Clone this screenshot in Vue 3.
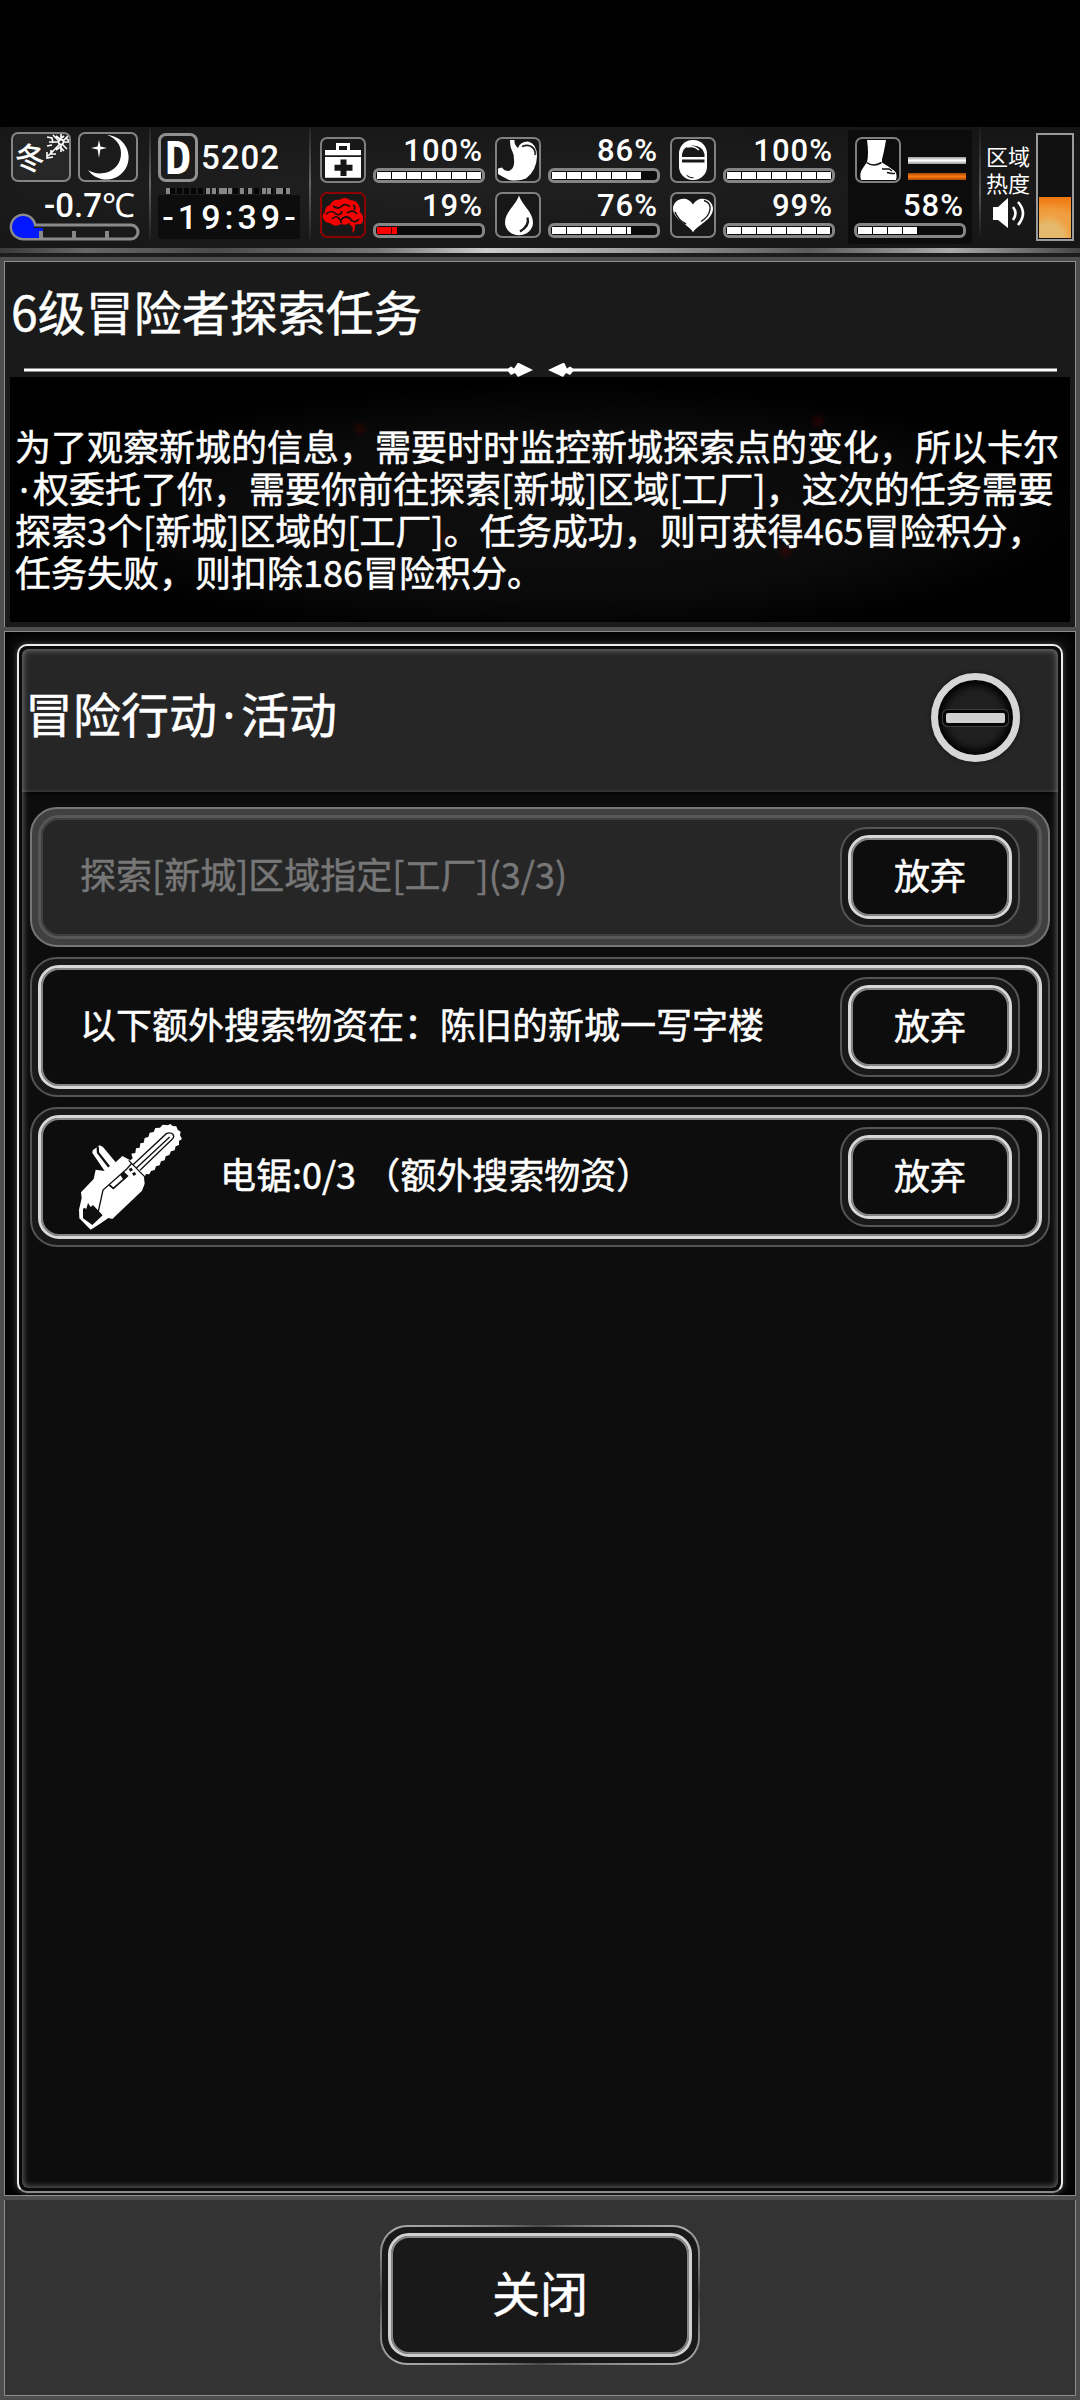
<script setup>
const stats = [
  { icon: 'kit', value: 100 },
  { icon: 'stomach', value: 86 },
  { icon: 'pill', value: 100 },
  { icon: 'brain', value: 19, danger: true },
  { icon: 'drop', value: 76 },
  { icon: 'heart', value: 99 },
]
const barcode = [0, 40, 46, 53, 57, 62, 74, 82, 96, 101, 110, 113, 120]
const fillWidth = (v) => Math.round(v * 1.04) + 'px'
</script>

<template>
  <div class="screen">
    <header class="hud">
      <section class="climate">
        <div class="tiles">
          <div class="tile winter">
            <span>冬</span>
            <svg class="flake" viewBox="0 0 24 26" width="24" height="26" fill="none" stroke="#fff" stroke-width="1.6">
              <path d="M16 0v18M4 8h20M8 1l14 14M24 1L3 22M2 3l5 1 1 5M2 12l5-1M11 2l4 3 4-3M11 16l4-3 4 4M21 4l3 3M2 18v6l6-1M6 16v4h5" />
              <circle cx="16" cy="8" r="2.4" fill="#222" />
            </svg>
          </div>
          <div class="tile">
            <svg viewBox="0 0 56 46" width="56" height="46" fill="#fff">
              <path d="M27 1A22.3 22.3 0 1 1 8 36C20 44 41 38 41 19C41 11 36 4 27 1z" />
              <path d="M19 6l1.4 6.6L27 14l-6.6 1.4L19 24l-1.4-8.6L11 14l6.6-1.4z" />
            </svg>
          </div>
        </div>
        <div class="lcd temp">-0.7℃</div>
        <svg class="thermo" viewBox="0 0 132 30" width="132" height="30">
          <path d="M26 13H122a7 7 0 0 1 0 14H15A12 12 0 1 1 26 13z" fill="#191919" stroke="#8b8b8b" stroke-width="3" />
          <path d="M25 16h9v4l-3 1v5H15A11 11 0 1 1 25 16z" fill="#0418ff" />
          <path d="M32 19v7M65 19v7M98 19v7" stroke="#888" stroke-width="4" />
        </svg>
      </section>
      <i class="sep"></i>
      <section class="clock">
        <div class="day"><b class="lcd">D</b><span class="lcd">5202</span></div>
        <svg viewBox="0 0 126 8" width="126" height="8">
          <path d="M4 4h118" stroke="#050505" stroke-width="6" stroke-dasharray="5 2" />
          <rect v-for="x in barcode" :key="x" :x="x" y="1" width="4" height="6" fill="#868686" />
        </svg>
        <div class="lcd time">-19:39-</div>
      </section>
      <i class="sep"></i>
      <section class="stats">
        <div v-for="s in stats" :key="s.icon" class="stat">
          <div class="ico" :class="{ red: s.danger }">
            <svg viewBox="2 2 42 42" width="42" height="42" fill="#fff">
              <g v-if="s.icon === 'kit'">
                <path d="M16 13V6h14v7h11v5.300H5V13zM19 13h8V9h-8z" fill-rule="evenodd" />
                <path d="M5 20h36v20.700H5z" />
                <path d="M20.500 22.500h6v5.300h6v6h-6v5.200h-6v-5.200h-6v-6h6z" fill="#161616" />
              </g>
              <g v-else-if="s.icon === 'stomach'">
                <path d="M15 3h4.500q-.5 5 3.500 8q2-6.500 10-6.500q9 2 9 15q-.5 14-11 22q-7 3-17 1.500q-6-3-11-6v-5.500l4-1q2 3.500 7 3.500q6-2.500 5-11q0-6-2-9.500t-2-10.500z" />
                <path d="M27 9.500q6-2.500 10 .5t3 8" fill="none" stroke="#181818" stroke-width="1.600" />
              </g>
              <g v-else-if="s.icon === 'pill'">
                <rect x="9" y="3" width="28" height="40" rx="13.500" />
                <path d="M12 20v-3q1-8 11-8.500q10 .5 11.500 8.500v3z" fill="#181818" />
                <path d="M17 10q7-2 12 3" fill="none" stroke="#fff" stroke-width="1.500" />
                <path d="M12 22.500h22.500v3H12zM16 37.500q4 3 8 2.800l-1 1q-5 0-7-3.800z" fill="#181818" />
              </g>
              <g v-else-if="s.icon === 'brain'" fill="#f50000">
                <path d="M3 26q-1-4 2-6 0-6 5-7 3-6 9-5 6-4 11 0 7 0 9 6 2 3 1 6 4 3 3 9-1 4-6 3-5 3-8-1-3 3-8 1-6 4-11-1-5 0-7-5z" />
                <path d="M29 32q5-1 6 2 0 4-2 7-1-1 0-5-1-2-4-4z" />
                <path d="M6 22q6-5 10 0 5 2 6-3M13 14q5 4 9 0 4-3 8 1M27 21q6-4 10 1M12 27q5-5 8 1M23 26q5-3 9 3 4 2 7-2M33 13q3 2 1 5M22 31q-3-2 1-5" fill="none" stroke="#1b1010" stroke-width="1.700" />
              </g>
              <g v-else-if="s.icon === 'drop'">
                <path d="M24 3.500C27 13 38 20 38 30.500A14 12.700 0 0 1 10 30.500C10 20 21 13 24 3.500z" />
                <path d="M32.500 25.500q2.500 8-7.500 14" fill="none" stroke="#181818" stroke-width="2.300" />
              </g>
              <g v-else>
                <path d="M23 40.500C20 33 3 28 3 16.500C3 7 17 2 23 12.500C29 2 43 7 43 16.500C43 28 27 33 23 40.500z" />
                <path d="M34 8.500q7 2 6 9t-9 12M5 20q3 8 11 12" fill="none" stroke="#181818" stroke-width="1.400" />
              </g>
            </svg>
          </div>
          <div class="gauge">
            <span class="lcd">{{ s.value }}%</span>
            <div class="bar" :class="{ red: s.danger }"><i :style="{ width: fillWidth(s.value) }"></i></div>
          </div>
        </div>
      </section>
      <section class="stamina">
        <div class="boots">
          <div class="ico">
            <svg viewBox="2 2 42 42" width="42" height="42" fill="#fff">
              <path d="M12 3h19q-2 12-4 19.500v3q8 5 12 8t2 9.500H6q-2-7 2-12l4-6q2-8 0-22z" />
              <path d="M11.500 25.500q7 5 15 0M27 32h7l3 2M32 35.500l5 1h3" fill="none" stroke="#111" stroke-width="1.500" />
            </svg>
          </div>
          <div class="lines"><i></i><i class="orange"></i></div>
        </div>
        <span class="lcd">58%</span>
        <div class="bar"><i style="width: 60px"></i></div>
      </section>
      <i class="sep short"></i>
      <section class="heat">
        <div class="heat-label">
          <span>区域</span><span>热度</span>
          <svg viewBox="0 0 34 31" width="34" height="31">
            <path d="M1 9h5L16 0v30L6 22H1z" fill="#fff" />
            <path d="M21 9q5 6 0 13M26 4q10 11 0 23" fill="none" stroke="#fff" stroke-width="2.600" />
          </svg>
        </div>
        <div class="meter"><i></i></div>
      </section>
    </header>
    <div class="rail"></div>

    <section class="panel intro">
      <h1>6级冒险者探索任务</h1>
      <svg class="rule" viewBox="0 0 1070 16" width="1070" height="16" fill="#fff">
        <path d="M19 5.500h484l3-2 3 2 4-6 15 7.500-15 7-3-4-4 2-3-3.500H19z" />
        <path d="M1052 5.500H568l-3-2-3 2-3-6-16 7.500 15 7 3-4 4 2 3-3.500h484z" />
      </svg>
      <div class="desc">
        <p>为了观察新城的信息，需要时时监控新城探索点的变化，所以卡尔</p>
        <p><span class="dot">·</span>权委托了你，需要你前往探索[新城]区域[工厂]，这次的任务需要</p>
        <p>探索3个[新城]区域的[工厂]。任务成功，则可获得465冒险积分，</p>
        <p>任务失败，则扣除186冒险积分。</p>
      </div>
    </section>

    <section class="panel board">
      <div class="frame">
        <div class="inner">
          <div class="head">
            <h2>冒险行动<span class="dot">·</span>活动</h2>
            <button class="collapse"><i></i></button>
          </div>
          <div class="list">
            <div class="row done">
              <div class="body">
                <span class="label">探索[新城]区域指定[工厂](3/3)</span>
                <button class="btn"><span>放弃</span></button>
              </div>
            </div>
            <div class="row">
              <div class="body">
                <span class="label">以下额外搜索物资在：陈旧的新城一写字楼</span>
                <button class="btn"><span>放弃</span></button>
              </div>
            </div>
            <div class="row">
              <div class="body">
                <svg class="saw" viewBox="54 40 318 326" width="106" height="108.700">
                  <path d="M92 360L58 326L57 300L65 265L63 248L101 208L107 180L134 184L97 130L98 122L119 107L129 112L167 158L187 139L211 152L218 146L214 132L226 130L228 116L239 114L241 101L251 99L254 85L265 82L269 69L281 67L286 55L300 54L308 45L323 47L331 43L338 49L349 50L353 60L362 66L360 77L366 88L357 94L357 106L347 110L344 122L333 125L328 136L317 140L314 152L303 155L299 167L288 170L284 181L273 184L268 194L258 193L252 205L254 222L246 243L157 328L145 325L118 344z" fill="#fff" />
                  <path d="M84 280L92 292L99 286L128 317L97 346L69 326L69 297L76 294L78 300z" fill="#101010" />
                  <g fill="none" stroke="#101010">
                    <path d="M115 305L129 241L201 177L216 160M206 152L256 203M219 165L319 72Q331 66 339 74Q344 82 337 88L240 182M230 174L329 82" stroke-width="4" />
                    <path d="M113 111L114 129L147 171" stroke-width="7" />
                    <path d="M148 226L160 236L202 199L190 188" stroke-width="5" />
                  </g>
                  <path d="M181 196L191 187L201 202L191 212zM206 178l8-4 5 7-8 5zM216 191l8-4 5 7-8 5z" fill="#101010" />
                </svg>
                <span class="label">电锯:0/3 （额外搜索物资）</span>
                <button class="btn"><span>放弃</span></button>
              </div>
            </div>
          </div>
        </div>
      </div>
    </section>

    <footer class="panel foot">
      <button class="btn close"><span>关闭</span></button>
    </footer>
  </div>
</template>

<style>
body { margin: 0; background: #000; }
</style>

<style scoped>
* { box-sizing: border-box; }
.screen {
  width: 1080px; height: 2400px; padding-top: 127px; background: #000; color: #fff;
  display: flex; flex-direction: column; overflow: hidden;
  font-family: "Noto Sans CJK SC", sans-serif;
}
h1, h2, p { margin: 0; font-weight: 400; }
h1, h2, p, .label, .btn { -webkit-text-stroke: .5px currentColor; }
button { font: inherit; color: inherit; padding: 0; border: 0; background: none; }
svg { display: block; flex: none; }
.lcd {
  font-family: Roboto, sans-serif; font-weight: 500; font-size: 31px; line-height: 22px;
  letter-spacing: 1px; white-space: nowrap; display: block;
}

/* status bar */
.hud {
  height: 121px; flex: none; display: flex; align-items: flex-start;
  background: radial-gradient(ellipse at 40% 50%, #202020, #191919 60%, #151515);
}
.climate { width: 149px; padding: 5px 0 0 9px; flex: none; }
.tiles { display: flex; gap: 7px; padding-left: 2px; }
.tile {
  width: 60px; height: 50px; border: 2px solid #858585; border-radius: 7px; overflow: hidden;
  display: flex; flex: none; position: relative; background: #1b1b1b;
}
.winter { background: #272727; }
.winter span { font-size: 30px; line-height: 44px; margin-left: 2px; font-weight: 500; transform: rotate(8deg); }
.flake { position: absolute; right: 0; top: 0; }
.temp { margin-top: 12px; line-height: 24px; font-size: 33px; text-align: right; padding-right: 14px; letter-spacing: 0; }
.thermo { margin-top: -6px; }
.sep { width: 2px; height: 112px; flex: none; background: linear-gradient(#222, #666 50%, #222); }
.clock { width: 158px; padding: 6px 8px 0 7px; flex: none; display: flex; flex-direction: column; }
.day { display: flex; align-items: center; height: 49px; }
.day b {
  width: 40px; height: 49px; border: 3px solid #909090; border-radius: 8px; flex: none;
  font-size: 44px; line-height: 45px; text-align: center; font-weight: 700; letter-spacing: 0;
  font-family: "DejaVu Sans Mono", monospace;
}
.day span { font-size: 33px; letter-spacing: 1px; margin: 1px 0 0 3px; }
.clock svg { margin: 5px 0 0 8px; }
.time {
  width: 142px; height: 44px; line-height: 45px; background: #0d0d0d; border-radius: 3px;
  text-align: center; font-size: 34px; letter-spacing: 4px; padding-left: 4px;
}
.stats { width: 537px; padding: 10px 0 0 9px; flex: none; display: grid; grid-template-columns: repeat(3, 175px); row-gap: 9px; }
.stat { display: flex; gap: 7px; height: 46px; }
.ico { width: 46px; height: 46px; border: 2px solid #808080; border-radius: 7px; flex: none; background: #181818; overflow: hidden; }
.ico.red { border-color: #8e0000; }
.gauge { width: 112px; display: flex; flex-direction: column; padding-top: 3px; }
.gauge .lcd { text-align: right; padding-right: 2px; height: 28px; }
.bar {
  width: 112px; height: 15px; border: 3px solid #858585; border-radius: 6px; background: #0b0b0b;
  padding: 1px 0 1px 1px; display: flex;
}
.bar i {
  display: block; height: 7px;
  background: repeating-linear-gradient(90deg, #fff 0 14px, #000 14px 15px);
}
.bar.red i { background: repeating-linear-gradient(90deg, #f00 0 14px, #600 14px 15px); }
.stamina { width: 124px; height: 114px; margin-top: 3px; padding: 7px 6px 0 6px; background: #0c0c0c; border-radius: 3px; flex: none; }
.boots { display: flex; gap: 7px; padding-left: 1px; }
.boots .ico { background: #0c0c0c; }
.lines { width: 58px; padding-top: 20px; display: flex; flex-direction: column; gap: 9px; }
.lines i { height: 7px; background: linear-gradient(#999, #fff 50%, #999); }
.lines .orange { background: linear-gradient(#a34a00, #ff7a10 50%, #a34a00); }
.stamina > .lcd { text-align: right; padding-right: 2px; margin: 12px 0 6px; }
.sep.short { margin-left: 7px; height: 110px; background: linear-gradient(#1a1a1a, #555 60%, #1a1a1a); }
.heat { display: flex; flex: 1; padding: 6px 0 0 5px; }
.heat-label { width: 50px; padding-top: 9px; display: flex; flex-direction: column; }
.heat-label span { font-size: 22px; line-height: 27px; white-space: nowrap; }
.heat-label svg { margin: 2px 0 0 6px; }
.meter {
  width: 38px; height: 108px; border: 2px solid #9a9a9a; padding: 1px; background: #111;
  display: flex; align-items: flex-end;
}
.meter i { width: 32px; height: 41px; background: radial-gradient(circle at 30% 100%, #e5b96c 0 30%, #f0a040 50%, transparent 75%), linear-gradient(#f07810, #f09a3a 40%, #dcc08c); }
.rail {
  height: 9px; flex: none; border-bottom: 4px solid #1c1c1c;
  background: linear-gradient(90deg, #3a3a3a, #666 8%, #4a4a4a 20%, #777 35%, #ccc 45%, #999 60%, #5a5a5a 75%, #aaa 88%, #444);
}

/* bevelled panels */
.panel { border: 4px solid #4d4d4d; flex: none; position: relative; }
.intro { height: 370px; border-bottom: 0; background: #1a1a1a; box-shadow: inset 1px 1px #8c8c8c, inset -1px 0 #8c8c8c; }
h1 { font-size: 48px; line-height: 70px; padding: 14px 0 0 7px; height: 102px; white-space: nowrap; }
.rule { margin: 0 1px; }
.desc {
  margin: -2px 6px 0; height: 245px; padding: 47px 0 0 5px; white-space: nowrap;
  background:
    radial-gradient(circle 9px at 350px 52px, rgba(90, 0, 0, .35), transparent),
    radial-gradient(circle 9px at 808px 44px, rgba(90, 0, 0, .35), transparent),
    radial-gradient(circle 10px at 435px 160px, rgba(90, 0, 0, .35), transparent),
    radial-gradient(circle 9px at 776px 174px, rgba(90, 0, 0, .45), transparent),
    radial-gradient(ellipse at 52% 55%, #0f0f0f, #0a0a0a 45%, #000 68%);
}
.desc p { font-size: 36px; line-height: 42px; height: 42px; }
.dot { display: inline-block; width: .5em; text-align: center; font-family: "Noto Sans", sans-serif; line-height: 1; }

.board {
  height: 1573px; border-bottom: 4px solid #4d4d4d; background: #0a0a0a; padding: 13px 13px 3px 13px;
  box-shadow: inset 0 0 0 1px #8c8c8c, inset 0 0 10px 4px #000;
}
.frame {
  height: 1549px; border: 2px solid #ececec; border-bottom-color: #8c8c8c; border-radius: 10px; padding: 3px;
  box-shadow: 0 0 6px rgba(255, 255, 255, .25); background: #0a0a0a;
}
.inner {
  height: 1539px; border-radius: 6px; background: #0d0d0d; overflow: hidden; position: relative;
}
.inner::after {
  content: ""; position: absolute; inset: 0; border-radius: 6px; pointer-events: none;
  box-shadow: inset 0 0 6px 1px rgba(255, 255, 255, .38);
}
.head {
  height: 143px; background: #262626; border-bottom: 2px solid #333; display: flex;
  justify-content: space-between; padding: 24px 38px 0 3px; box-shadow: 0 1px 6px #000;
}
h2 { font-size: 48px; line-height: 70px; padding-top: 4px; white-space: nowrap; }
.collapse {
  width: 89px; height: 89px; border-radius: 50%; border: 7px solid #d6d6d6; flex: none;
  background: #202020; box-shadow: inset 0 0 9px 5px #000, 0 0 4px #111;
  display: flex; align-items: center; justify-content: center;
}
.collapse i { width: 59px; height: 10px; border-radius: 2px; background: #d0d0d0; box-shadow: 0 0 0 3px #050505, 0 0 0 4px #3c3c3c; flex: none; }
.list { padding: 15px 8px 0; display: flex; flex-direction: column; gap: 10px; }

/* double outlined boxes */
.row, .btn { border: 2px solid #555; border-radius: 27px; background: #191919; padding: 6px; display: block; }
.row { height: 140px; }
.body, .btn > span {
  height: 100%; border: 3px solid #d8d8d8; border-radius: 21px; background: #0d0d0d;
  box-shadow: inset 0 0 0 2px #858585;
}
.body { display: flex; align-items: center; padding: 0 19px 0 39px; }
.label { font-size: 36px; line-height: 52px; white-space: pre; padding-bottom: 8px; }
.btn { width: 180px; height: 100px; margin-left: auto; flex: none; }
.btn > span { display: flex; justify-content: center; align-items: center; font-size: 36px; line-height: 52px; padding-bottom: 7px; }
.done { border-color: #777; background: #404040; }
.done .body { border-color: #575757; background: #262626; box-shadow: inset 0 0 0 2px #404040; }
.done .label { color: #777; }
.saw { margin: 1px 36px 0 -2px; }

.foot {
  height: 200px; border-top: 0; background: #323332; padding-top: 25px;
  box-shadow: inset 1px -1px #8c8c8c, inset -1px 0 #8c8c8c;
}
.close {
  width: 320px; height: 140px; margin: 0 auto; border: 2px solid transparent;
  background: linear-gradient(#191919, #191919) padding-box,
    conic-gradient(from -66deg at 50% 50%, #aaa, #4a4a4a 66deg, #aaa 132deg, #4a4a4a 156deg, #aaa 180deg, #4a4a4a 246deg, #aaa 312deg, #4a4a4a 336deg, #aaa) border-box;
}
.close > span { font-size: 48px; line-height: 70px; background: #191919; border-color: #d0d0d0; padding-bottom: 9px; }
</style>
